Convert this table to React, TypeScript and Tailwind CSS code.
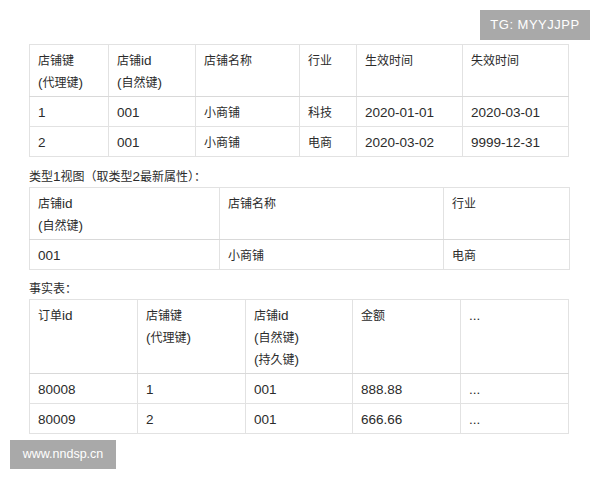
import React from "react"

// splits a string so CJK runs render a bit smaller than latin runs, like the source
function Txt({ s }: { s: string }) {
  const parts = s.split(/([\u3000-\u9fff\uff00-\uffef]+)/).filter(Boolean)
  return (
    <div className="h-[22px] whitespace-nowrap leading-[22px]">
      {parts.map((p, i) =>
        /[\u3000-\u9fff\uff00-\uffef]/.test(p) ? (
          <span key={i} className="text-[12px] leading-[22px]">{p}</span>
        ) : (
          <span key={i} className="text-[13.5px] leading-[22px]">{p}</span>
        )
      )}
    </div>
  )
}

type Tbl = {
  widths: string[]
  head: string[][]
  rows: string[][]
}

const dimTable: Tbl = {
  widths: ["w-[79px]", "w-[87px]", "w-[104px]", "w-[57px]", "w-[106px]", "w-[106px]"],
  head: [["店铺键", "(代理键)"], ["店铺id", "(自然键)"], ["店铺名称"], ["行业"], ["生效时间"], ["失效时间"]],
  rows: [
    ["1", "001", "小商铺", "科技", "2020-01-01", "2020-03-01"],
    ["2", "001", "小商铺", "电商", "2020-03-02", "9999-12-31"],
  ],
}

const viewTable: Tbl = {
  widths: ["w-[190px]", "w-[224px]", "w-[126px]"],
  head: [["店铺id", "(自然键)"], ["店铺名称"], ["行业"]],
  rows: [["001", "小商铺", "电商"]],
}

const factTable: Tbl = {
  widths: ["w-[108px]", "w-[108px]", "w-[107px]", "w-[108px]", "w-[108px]"],
  head: [["订单id"], ["店铺键", "(代理键)"], ["店铺id", "(自然键)", "(持久键)"], ["金额"], ["..."]],
  rows: [
    ["80008", "1", "001", "888.88", "..."],
    ["80009", "2", "001", "666.66", "..."],
  ],
}

function DataTable({ t }: { t: Tbl }) {
  return (
    <table className="table-fixed border-collapse">
      <colgroup>
        {t.widths.map((w, i) => (
          <col key={i} className={w} />
        ))}
      </colgroup>
      <thead>
        <tr>
          {t.head.map((lines, i) => (
            <th
              key={i}
              className="border border-[#e2e2e2] border-b-[#d9d9d9] px-2 pt-[4px] pb-[3px] text-left align-top font-normal text-[#2b2b2b]"
            >
              {lines.map((l, j) => (
                <Txt key={j} s={l} />
              ))}
            </th>
          ))}
        </tr>
      </thead>
      <tbody>
        {t.rows.map((r, i) => (
          <tr key={i}>
            {r.map((c, j) => (
              <td key={j} className="border border-[#e2e2e2] px-2 pt-[4px] pb-[3px] align-top text-[#2b2b2b]">
                <Txt s={c} />
              </td>
            ))}
          </tr>
        ))}
      </tbody>
    </table>
  )
}

export default function App() {
  return (
    <div className="relative w-[600px] h-[480px] overflow-hidden bg-white pl-[29px] pt-[44px] font-['Liberation_Sans','Noto_Sans_CJK_SC',sans-serif]">
      <DataTable t={dimTable} />

      <div className="mt-[8px] text-[#2b2b2b]">
        <Txt s="类型1视图（取类型2最新属性）：" />
      </div>
      <DataTable t={viewTable} />

      <div className="mt-[7px] text-[#2b2b2b]">
        <Txt s="事实表：" />
      </div>
      <DataTable t={factTable} />

      {/* watermarks */}
      <div className="absolute left-[480px] top-[10px] flex h-[30px] w-[110px] items-center justify-center bg-[#a9a9a9] text-[13px] tracking-[0.5px] text-white">
        TG: MYYJJPP
      </div>
      <div className="absolute left-[10px] top-[440px] flex h-[29px] w-[106px] items-center justify-center bg-[#a9a9a9] text-[12.5px] text-white">
        www.nndsp.cn
      </div>
    </div>
  )
}
